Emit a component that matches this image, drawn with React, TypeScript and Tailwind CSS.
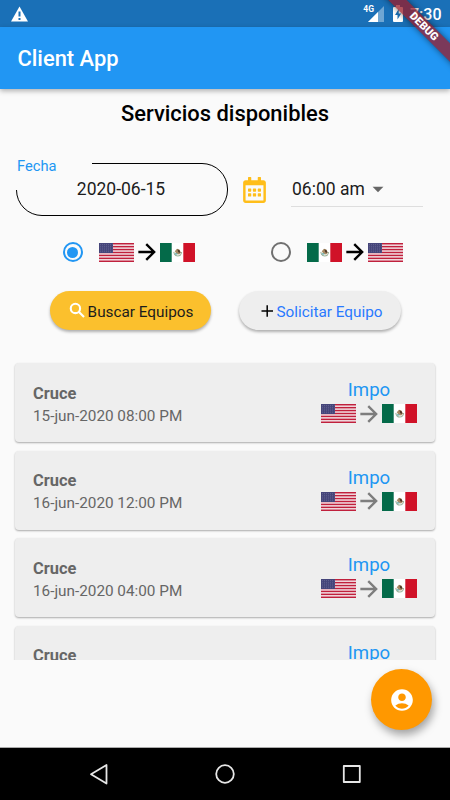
import { FaRegCalendarAlt } from "react-icons/fa";
import { MdAccountCircle, MdArrowDropDown } from "react-icons/md";

const services = [
  { id: 1, title: "Cruce", date: "15-jun-2020 08:00 PM", type: "Impo" },
  { id: 2, title: "Cruce", date: "16-jun-2020 12:00 PM", type: "Impo" },
  { id: 3, title: "Cruce", date: "16-jun-2020 04:00 PM", type: "Impo" },
  { id: 4, title: "Cruce", date: "16-jun-2020 08:00 PM", type: "Impo" },
];

function UsaFlag() {
  return (
    <svg width="35" height="19" viewBox="0 0 35 19" className="shrink-0">
      <rect width="35" height="19" fill="#f3e4e8" />
      {[0, 2, 4, 6, 8, 10, 12].map((i) => (
        <rect key={i} y={(i * 19) / 13} width="35" height={19 / 13} fill="#c0203c" />
      ))}
      <rect width="14" height="10" fill="#45457a" />
      {[1.5, 3.3, 5.1, 6.9, 8.7].map((y) => (
        <path key={y} d={`M1 ${y}H13.5`} stroke="#8080a8" strokeWidth="0.6" strokeDasharray="0.8 1.2" />
      ))}
    </svg>
  );
}

function MexicoFlag() {
  return (
    <svg width="35" height="19" viewBox="0 0 35 19" className="shrink-0">
      <rect width="35" height="19" fill="#fff" />
      <rect width="11.7" height="19" fill="#046a49" />
      <rect x="23.3" width="11.7" height="19" fill="#d01228" />
      <path d="M13.8 8.8q.6 4.2 4 4.2t3.8-4" fill="none" stroke="#9bb39a" strokeWidth="1.1" />
      <path d="M14.8 8.2 17 5.8l2.4.6 1.5 3-1.6 2-2.6-.3z" fill="#a68a63" />
      <path d="m17.4 6.2 2.4 1.4.6 2.4-2.2-.8z" fill="#4f3828" />
      <path d="M15 10.2h2.4v1.4H15z" fill="#69aeb0" />
    </svg>
  );
}

function Route({ from, arrow }: { from: "us" | "mx"; arrow: string }) {
  return (
    <div className="flex items-center">
      {from === "us" ? <UsaFlag /> : <MexicoFlag />}
      <svg viewBox="0 0 24 24" fill="none" stroke="currentColor" strokeWidth="2.2" className={`h-[26px] w-[26px] shrink-0 ${arrow}`}>
        <path d="M4 12h14.500M11.300 4.700l7.300 7.300-7.300 7.300" />
      </svg>
      {from === "us" ? <MexicoFlag /> : <UsaFlag />}
    </div>
  );
}

function StatusBar() {
  return (
    <div className="flex h-[27px] items-center bg-[#1a70b7] pl-[11px] pr-[9px] text-white">
      <svg width="17" height="16" viewBox="0 0 17 16">
        <path d="M8.5.5 17 15.5H0z" fill="#fff" />
        <path d="M8.5 5.5v5M8.5 12v2" stroke="#1a70b7" strokeWidth="2" />
      </svg>
      <span className="ml-auto mb-[9px] text-[8.5px] font-bold leading-[9px]">4G</span>
      <svg width="16" height="16" viewBox="0 0 16 16" className="-ml-[6px]">
        <path d="M0 16 16 0v16z" fill="#6fa6d3" />
        <path d="M0 16 10 6v10z" fill="#fff" />
      </svg>
      <svg width="10" height="17" viewBox="0 0 10 17" className="ml-[9px]">
        <path d="M3 0h4v2h2q1 0 1 1v13q0 1-1 1H1q-1 0-1-1V3q0-1 1-1h2z" fill="#fff" />
        <path d="M5.7 4 2 10h2.5v4.5L8.2 8.5H5.7z" fill="#1a70b7" />
      </svg>
      <span className="ml-[7px] w-[31px] pt-[2px] text-[16px] font-medium leading-none whitespace-nowrap">7:30</span>
    </div>
  );
}

function DebugBanner() {
  return (
    <div className="pointer-events-none absolute right-0 top-0 z-20 h-[90px] w-[90px] overflow-hidden">
      <div className="absolute left-[4px] top-[20px] flex h-[13px] w-[120px] rotate-45 items-center justify-center bg-[#9a1a27]/75 shadow-[0_0_6px_rgba(0,0,0,0.5)]">
        <span className="text-[11px] font-black leading-none text-white">DEBUG</span>
      </div>
    </div>
  );
}

function ServiceCard({ service }: { service: (typeof services)[number] }) {
  return (
    <div className="flex h-[79px] shrink-0 justify-between rounded bg-[#eeeeee] pl-[18px] pr-[18px] shadow-[0_1px_2px_rgba(0,0,0,0.32)]">
      <div className="pt-[19.5px] text-[#666666]">
        <p className="text-[16.4px] font-bold leading-[22px]">{service.title}</p>
        <p className="text-[15.3px] leading-[22px]">{service.date}</p>
      </div>
      <div className="flex flex-col items-center pt-[16px]">
        <span className="text-[18.6px] leading-[22px] text-[#2196f3]">{service.type}</span>
        <div className="-mt-[0.5px]">
          <Route from="us" arrow="text-[#7d7d7d]" />
        </div>
      </div>
    </div>
  );
}

export default function App() {
  return (
    <div className="relative flex h-[800px] w-[450px] flex-col overflow-hidden bg-[#fafafa] font-['Roboto',sans-serif] text-black">
      <StatusBar />
      <header className="z-10 flex h-[62px] shrink-0 items-center bg-[#2196f3] pl-[17.5px] pt-[2px] shadow-[0_2px_5px_rgba(0,0,0,0.3)]">
        <h1 className="text-[21.9px] font-medium text-white">Client App</h1>
      </header>

      <main className="flex h-[658px] flex-col">
        <h2 className="pt-[10px] text-center text-[21.9px] font-medium leading-[30px]">Servicios disponibles</h2>

        <div className="mt-[34px] flex h-[53px] items-center pl-[16px]">
          <div className="relative flex h-[53px] w-[212px] items-center justify-center rounded-[26px] border border-black">
            <div className="absolute -left-px -top-px h-[27px] w-[76px] bg-[#fafafa]">
              <span className="absolute left-px -top-[6px] text-[14.7px] leading-[18px] text-[#2196f3]">Fecha</span>
            </div>
            <span className="relative -left-[1px] text-[17.5px] text-[#1c1c1c]">2020-06-15</span>
          </div>
          <FaRegCalendarAlt className="ml-[15px] h-[26px] w-[23px] text-[#ffbe1a]" />
          <div className="ml-[25px] flex h-[34px] w-[132px] items-center border-b border-[#dedede]">
            <span className="pl-[1px] text-[17.5px] text-[#1c1c1c]">06:00 am</span>
            <MdArrowDropDown className="h-[26px] w-[26px] text-[#666666]" />
          </div>
        </div>

        <div className="mt-[23px] flex h-[26px] items-center">
          <span className="ml-[62.5px] mr-[16px] flex h-[20.500px] w-[20.500px] items-center justify-center rounded-full border-2 border-[#2196f3]">
            <span className="h-[11px] w-[11px] rounded-full bg-[#2196f3]" />
          </span>
          <Route from="us" arrow="text-black" />
          <span className="ml-[76px] mr-[16px] h-[20px] w-[20px] rounded-full border-2 border-[#707070]" />
          <Route from="mx" arrow="text-black" />
        </div>

        <div className="mt-[26px] flex gap-[28px] pl-[50px]">
          <button className="flex h-[39px] w-[161px] items-center justify-center rounded-full bg-[#fbc02d] text-[15.3px] shadow-[0_2px_3px_rgba(0,0,0,0.3)]">
            <svg viewBox="0 0 24 24" fill="none" stroke="#fff" strokeWidth="2.5" className="h-[20px] w-[20px] -translate-x-[0.5px] -translate-y-[0.5px]">
              <circle cx="9.500" cy="9.500" r="5.600" />
              <path d="m13.800 13.800 6 6" />
            </svg>
            <span className="pt-[4px] text-[#1c1c1c]">Buscar Equipos</span>
          </button>
          <button className="flex h-[39px] w-[162px] items-center justify-center rounded-full bg-[#eeeeee] text-[15.3px] shadow-[0_2px_3px_rgba(0,0,0,0.3)]">
            <svg viewBox="0 0 20 20" fill="none" stroke="#000" strokeWidth="1.5" className="h-[20px] w-[20px] -translate-x-[1px]">
              <path d="M4.500 10h11.500M10.200 4.200v11.500" />
            </svg>
            <span className="-ml-[1px] pt-[4px] text-[#2979ff]">Solicitar Equipo</span>
          </button>
        </div>

        <div className="mt-[29px] flex h-[301px] flex-col gap-[8.5px] overflow-hidden px-[15px] pt-[4px]">
          {services.map((service) => (
            <ServiceCard key={service.id} service={service} />
          ))}
        </div>
      </main>

      <button className="absolute left-[371px] top-[669px] flex h-[61px] w-[61px] items-center justify-center rounded-full bg-[#ff9800] shadow-[2px_5px_8px_rgba(0,0,0,0.35)]">
        <MdAccountCircle className="h-[26px] w-[26px] text-white" />
      </button>

      <nav className="mt-auto flex h-[53px] items-center border-t border-[#aaaaaa] bg-black">
        <svg width="450" height="52" viewBox="0 0 450 52" fill="none" stroke="#e6e6e6" strokeWidth="1.8" strokeLinejoin="round">
          <path d="M106.500 17v18.500L91 26.200z" />
          <circle cx="225" cy="26" r="8.800" />
          <rect x="343.800" y="18" width="16" height="16" />
        </svg>
      </nav>
      <DebugBanner />
    </div>
  );
}
